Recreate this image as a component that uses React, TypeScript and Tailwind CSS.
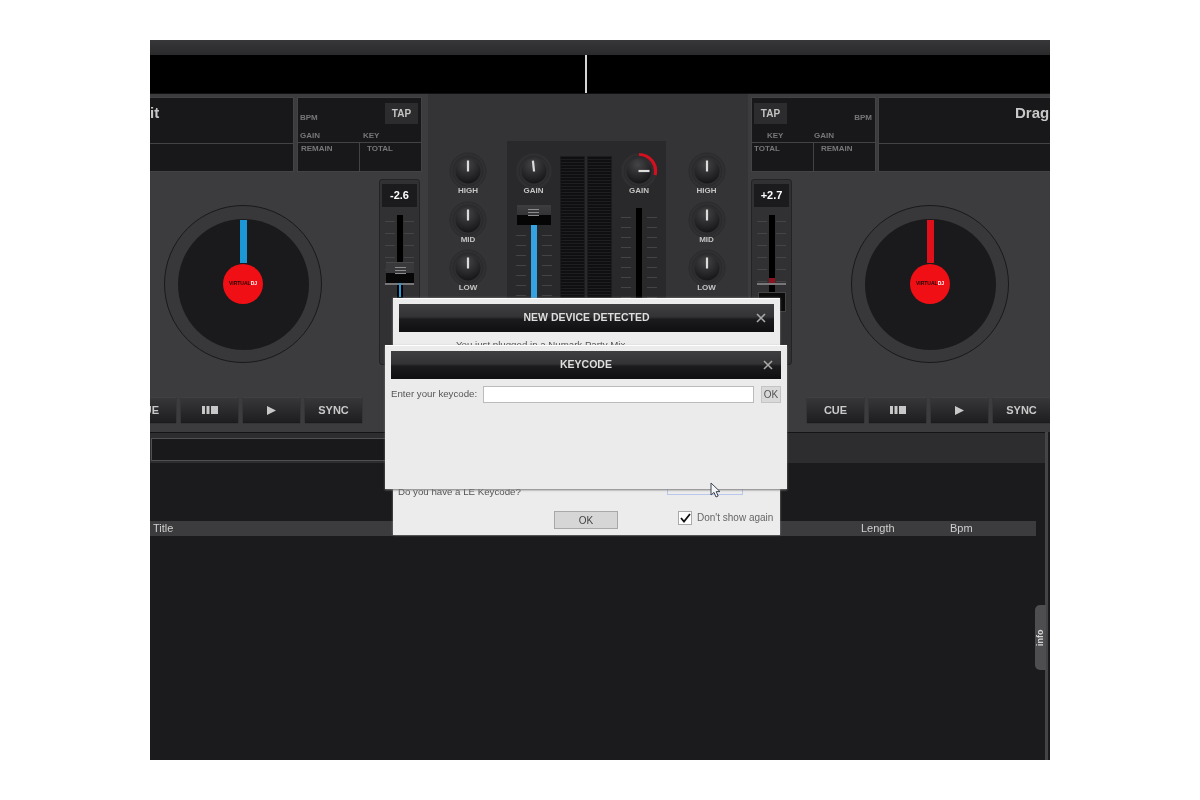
import { useId } from "react";

const FONT = "font-['Liberation_Sans',Arial,sans-serif]";

function Knob({ angle = 0, arc = false }: { angle?: number; arc?: boolean }) {
  const id = useId();
  return (
    <svg width="38" height="38" viewBox="0 0 38 38" className="block shrink-0">
      <defs>
        <radialGradient id={id} cx="45%" cy="25%" r="80%">
          <stop offset="0%" stopColor="#444446" />
          <stop offset="100%" stopColor="#131315" />
        </radialGradient>
      </defs>
      <circle cx="19" cy="19" r="18" fill="#303032" stroke="#2b2b2d" strokeWidth="1" />
      <circle cx="19" cy="19" r="15" fill="#2e2e30" stroke="#2a2a2c" strokeWidth="1" />
      {arc && (
        <path d="M19 2.5 A16.5 16.5 0 0 1 35 23" fill="none" stroke="#d3101f" strokeWidth="3.2" />
      )}
      <circle cx="19" cy="19" r="12.5" fill={`url(#${id})`} />
      <line
        x1="19"
        y1="19.5"
        x2="19"
        y2="8.5"
        stroke="#dcdcdc"
        strokeWidth="2.2"
        transform={`rotate(${angle} 19 19)`}
      />
    </svg>
  );
}

function KnobLabel({ children }: { children: string }) {
  return <span className="-mt-[4px] text-[8px] leading-[10px] font-bold text-[#c4c4c4]">{children}</span>;
}

function EqColumn() {
  return (
    <div className="flex flex-col items-center pt-[58px]">
      {["HIGH", "MID", "LOW"].map((label) => (
        <div key={label} className="flex h-[48.5px] flex-col items-center">
          <Knob />
          <KnobLabel>{label}</KnobLabel>
        </div>
      ))}
    </div>
  );
}

function Ticks({ count, gap }: { count: number; gap: string }) {
  return (
    <div className={`flex w-full flex-col ${gap}`}>
      {Array.from({ length: count }).map((_, i) => (
        <div key={i} className="flex justify-between">
          <span className="h-px w-[10px] bg-[#444446]" />
          <span className="h-px w-[10px] bg-[#444446]" />
        </div>
      ))}
    </div>
  );
}

function Meter() {
  return (
    <div className="h-[200px] w-[25px] border border-[#1c1c1e] bg-[repeating-linear-gradient(0deg,#1e1e20_0,#1e1e20_1px,#0f0f11_1px,#0f0f11_3px)]" />
  );
}

function HandleLines() {
  return (
    <>
      <span className="h-px w-[11px] bg-[#8c8c8e]" />
      <span className="mt-[2px] h-px w-[11px] bg-[#8c8c8e]" />
      <span className="mt-[2px] h-px w-[11px] bg-[#8c8c8e]" />
    </>
  );
}

function Pitch({ value, side }: { value: string; side: "left" | "right" }) {
  const left = side === "left";
  return (
    <div className="flex h-[186px] w-[41px] flex-col items-center rounded-[3px] border border-[#232325] bg-[#313133] px-[2px] pt-[4px]">
      <div className="flex h-[23px] w-[35px] items-center justify-center bg-[#1b1b1d] text-[11px] font-bold text-white">
        {value}
      </div>
      <div className="relative mt-[8px] w-full flex-1 px-[3px]">
        <div className="pt-[6px]">
          <Ticks count={6} gap="gap-[11px]" />
        </div>
        <div className="absolute left-[15px] top-0 h-full w-[6px] bg-black" />
        <div className="absolute left-[3px] right-[3px] top-[68px] h-[2px] bg-[#77777a]" />
        {left ? (
          <>
            <div className="absolute left-[4px] top-[47px] flex h-[21px] w-[28px] flex-col items-center border-t border-[#48484a] bg-[linear-gradient(#39393b_0,#39393b_50%,#070707_50%,#070707_100%)] pt-[4px]">
              <HandleLines />
            </div>
            <div className="absolute left-[17px] top-[68px] h-[14px] w-[2px] bg-[#2a9ad6]" />
          </>
        ) : (
          <>
            <div className="absolute left-[15px] top-[63px] h-[5px] w-[6px] bg-[#8c1220]" />
            <div className="absolute left-[4px] top-[77px] h-[20px] w-[28px] border border-[#444] bg-[#0b0b0b]" />
          </>
        )}
      </div>
    </div>
  );
}

function Platter({ color }: { color: string }) {
  return (
    <div className="flex h-[158px] w-[158px] shrink-0 items-center justify-center rounded-full border border-[#19191b] bg-[#38383a]">
      <div className="flex h-[131px] w-[131px] flex-col items-center rounded-full bg-[#1a1a1c]">
        <div className={`mt-[1px] h-[43px] w-[7px] ${color}`} />
        <div className="mt-[1px] flex h-[40px] w-[40px] items-center justify-center rounded-full bg-[#f00f14] text-[5px] font-bold leading-none text-[#220608]">
          VIRTUAL<span className="text-white">DJ</span>
        </div>
      </div>
    </div>
  );
}

function TransportButton({ children }: { children: React.ReactNode }) {
  return (
    <div className="flex h-[25px] w-[57px] shrink-0 items-center justify-center border-t border-[#404042] bg-[linear-gradient(#37373a,#1e1e20)] text-[11px] font-bold text-[#c9c9c9] shadow-[0_1px_1px_#1b1b1d]">
      {children}
    </div>
  );
}

function Transport() {
  return (
    <>
      <TransportButton>CUE</TransportButton>
      <TransportButton>
        <svg width="16" height="8" viewBox="0 0 16 8">
          <path d="M0 0h3v8H0zM4.5 0h3v8h-3zM9 0h7v8H9z" fill="#c8c8c8" />
        </svg>
      </TransportButton>
      <TransportButton>
        <svg width="9" height="9" viewBox="0 0 9 9">
          <path d="M0 0l9 4.5L0 9z" fill="#c8c8c8" />
        </svg>
      </TransportButton>
      <TransportButton>SYNC</TransportButton>
    </>
  );
}

const panel = "border border-[#434345] bg-[#18181a]";
const small = "text-[8px] leading-[10px] font-bold text-[#77777a]";

function LeftDeck() {
  return (
    <div className="flex w-[278px] shrink-0 flex-col pt-[3px]">
      <div className="flex h-[75px]">
        <div className={`flex w-[144px] flex-col border-l-0 ${panel}`}>
          <div className="h-[45px] pt-[6px] text-[15px] font-bold leading-[18px] text-[#c8c8c8]">it</div>
          <div className="flex-1 border-t border-[#434345]" />
        </div>
        <div className={`ml-[3px] flex w-[125px] flex-col ${panel}`}>
          <div className="relative h-[45px] border-b border-[#434345] pl-[2px] pt-[15px]">
            <div className={`${small} text-[#5c5c5f]`}>BPM</div>
            <div className={`mt-[8px] flex ${small}`}>
              <span className="w-[63px]">GAIN</span>
              <span>KEY</span>
            </div>
            <div className="absolute right-[3px] top-[5px] flex h-[21px] w-[33px] items-center justify-center bg-[#2c2c2e] text-[10px] font-bold text-[#c4c4c4]">
              TAP
            </div>
          </div>
          <div className="flex flex-1">
            <div className={`w-[62px] border-r border-[#434345] pl-[3px] pt-[1px] ${small}`}>REMAIN</div>
            <div className={`pl-[7px] pt-[1px] ${small}`}>TOTAL</div>
          </div>
        </div>
      </div>
      <div className="flex pt-[7px]">
        <div className="flex w-[229px] shrink-0 flex-col">
          <div className="ml-[14px] mt-[26px]">
            <Platter color="bg-[#1c97d6]" />
          </div>
          <div className="mt-[34px] flex justify-end gap-[5px] pr-[17px]">
            <Transport />
          </div>
        </div>
        <Pitch value="-2.6" side="left" />
      </div>
    </div>
  );
}

function Mixer() {
  return (
    <div className="flex w-[320px] shrink-0 bg-[#343436]">
      <div className="w-[79px] shrink-0 pl-px">
        <EqColumn />
      </div>
      <div className="mt-[47px] flex h-[291px] w-[159px] shrink-0 bg-[#29292b]">
        <div className="flex w-[53px] shrink-0 flex-col items-center pt-[11px]">
          <Knob angle={-6} />
          <KnobLabel>GAIN</KnobLabel>
          <div className="relative mt-[9px] flex w-[36px] flex-col items-center">
            <div className="flex h-[20px] w-[34px] flex-col items-center bg-[linear-gradient(#3d3d3f_0,#343436_50%,#050505_50%,#050505_100%)] pt-[4px]">
              <HandleLines />
            </div>
            <div className="h-[90px] w-[6px] bg-[#35a2e2]" />
            <div className="absolute left-0 top-[30px] w-full">
              <Ticks count={7} gap="gap-[9px]" />
            </div>
          </div>
        </div>
        <div className="flex shrink-0 gap-[2px] pt-[15px]">
          <Meter />
          <Meter />
        </div>
        <div className="flex w-[53px] shrink-0 flex-col items-center pl-[1px] pt-[11px]">
          <Knob angle={90} arc />
          <KnobLabel>GAIN</KnobLabel>
          <div className="relative mt-[12px] flex w-[36px] justify-center">
            <div className="h-[100px] w-[6px] bg-black" />
            <div className="absolute left-0 top-[9px] w-full">
              <Ticks count={9} gap="gap-[9px]" />
            </div>
          </div>
        </div>
      </div>
      <div className="flex-1 pr-px">
        <EqColumn />
      </div>
    </div>
  );
}

function RightDeck() {
  return (
    <div className="flex flex-1 flex-col pl-[3px] pt-[3px]">
      <div className="flex h-[75px]">
        <div className={`flex w-[125px] shrink-0 flex-col ${panel}`}>
          <div className="relative h-[45px] border-b border-[#434345] pt-[15px]">
            <div className={`pr-[3px] text-right ${small} text-[#5c5c5f]`}>BPM</div>
            <div className={`mt-[8px] flex pl-[15px] ${small}`}>
              <span className="w-[47px]">KEY</span>
              <span>GAIN</span>
            </div>
            <div className="absolute left-[2px] top-[5px] flex h-[21px] w-[33px] items-center justify-center bg-[#2c2c2e] text-[10px] font-bold text-[#c4c4c4]">
              TAP
            </div>
          </div>
          <div className="flex flex-1">
            <div className={`w-[62px] border-r border-[#434345] pl-[2px] pt-[1px] ${small}`}>TOTAL</div>
            <div className={`pl-[7px] pt-[1px] ${small}`}>REMAIN</div>
          </div>
        </div>
        <div className={`ml-[2px] flex flex-1 flex-col overflow-hidden border-r-0 ${panel}`}>
          <div className="h-[45px] whitespace-nowrap pl-[136px] pt-[6px] text-[15px] font-bold leading-[18px] text-[#c8c8c8]">
            Drag
          </div>
          <div className="flex-1 border-t border-[#434345]" />
        </div>
      </div>
      <div className="flex pt-[7px]">
        <Pitch value="+2.7" side="right" />
        <div className="flex flex-1 flex-col">
          <div className="ml-[59px] mt-[26px]">
            <Platter color="bg-[#e0101a]" />
          </div>
          <div className="mt-[34px] flex gap-[5px] pl-[15px]">
            <Transport />
          </div>
        </div>
      </div>
    </div>
  );
}

function TitleBar({ title }: { title: string }) {
  return (
    <div className="flex h-[28px] shrink-0 items-center bg-[linear-gradient(#3f3f41_0,#333335_45%,#1b1b1d_55%,#0f0f11_100%)] pr-[8px]">
      <span className="flex-1 pl-[18px] text-center text-[10.5px] font-bold text-[#dedede]">{title}</span>
      <svg width="10" height="10" viewBox="0 0 10 10">
        <path d="M1 1l8 8M9 1l-8 8" stroke="#a8a8a8" strokeWidth="1.6" />
      </svg>
    </div>
  );
}

function Dialogs() {
  return (
    <>
      <div className="absolute left-[243px] top-[258px] flex h-[237px] w-[387px] flex-col whitespace-nowrap border-t border-white bg-[#ececec] px-[6px] pt-[5px] shadow-[0_0_2px_#888]">
        <TitleBar title="NEW DEVICE DETECTED" />
        <div className="mt-[7px] pl-[57px] text-[9.7px] leading-[12px] text-[#555]">
          You just plugged in a Numark Party Mix
        </div>
        <div className="mt-[133px] flex h-[14px] items-end justify-between text-[9.7px] leading-[12px] text-[#555]">
          <span className="-ml-px">Do you have a LE Keycode?</span>
          <span className="mr-[31px] h-[11px] w-[76px] self-start border border-[#b9c8ea]" />
        </div>
        <div className="mt-[13px] flex items-start">
          <div className="ml-[155px] flex h-[18px] w-[64px] items-center justify-center border border-[#a8a8a8] bg-[#d6d6d6] text-[10px] text-[#444]">
            OK
          </div>
          <div className="ml-[60px] flex h-[14px] w-[14px] items-center justify-center border border-[#aaa] bg-white">
            <svg width="11" height="10" viewBox="0 0 11 10">
              <path d="M1 5l3 3.5L10 1" fill="none" stroke="#111" strokeWidth="1.8" />
            </svg>
          </div>
          <span className="ml-[5px] text-[10px] leading-[14px] text-[#666]">Don't show again</span>
        </div>
      </div>

      <div className="absolute left-[235px] top-[305px] flex h-[144px] w-[402px] flex-col whitespace-nowrap border-t border-white bg-[#ebebeb] px-[6px] pt-[5px] shadow-[0_1px_2px_#777]">
        <TitleBar title="KEYCODE" />
        <div className="mt-[7px] flex h-[17px] items-center">
          <span className="w-[92px] shrink-0 text-[9.7px] text-[#555]">Enter your keycode:</span>
          <div className="h-full w-[271px] border border-[#bbb] bg-white" />
          <div className="ml-[7px] flex h-full w-[20px] items-center justify-center border border-[#c4c4c4] bg-[#d9d9d9] text-[10px] text-[#555]">
            OK
          </div>
        </div>
      </div>

      <svg className="absolute left-[560px] top-[442px]" width="11" height="17" viewBox="0 0 11 17">
        <path d="M1 1v12l3-2.6 2 4.6 2.2-1-2-4.4H10z" fill="#f4f4f4" stroke="#3b4354" strokeWidth="1" />
      </svg>
    </>
  );
}

export default function App() {
  return (
    <div className={`flex min-h-[800px] justify-center bg-white pt-[40px] ${FONT}`}>
      <div className="relative flex h-[720px] w-[900px] flex-col overflow-hidden bg-[#1b1b1d] blur-[0.5px]">
        <div className="h-[15px] bg-[linear-gradient(#37373a,#2a2a2c)]" />
        <div className="flex h-[38px] bg-black">
          <div className="w-[435px]" />
          <div className="w-[2px] bg-[#d5d5d5]" />
        </div>
        <div className="h-px bg-[#111]" />

        <div className="flex h-[338px] bg-[#3c3c3e]">
          <LeftDeck />
          <Mixer />
          <RightDeck />
        </div>

        <div className="flex flex-1">
          <div className="flex flex-1 flex-col">
            <div className="flex h-[31px] items-start border-t border-[#141416] bg-[#2d2d2f] pl-px pt-[5px]">
              <div className="h-[23px] w-[300px] border border-[#505052] bg-[#19191b]" />
            </div>
            <div className="mt-[58px] flex h-[15px] w-[886px] items-center bg-[#3c3c3e] text-[11px] text-[#cfcfcf]">
              <span className="w-[711px] pl-[3px]">Title</span>
              <span className="w-[89px]">Length</span>
              <span>Bpm</span>
            </div>
          </div>
          <div className="w-[3px] bg-[#444446]" />
          <div className="w-[2px]" />
        </div>

        <div className="absolute left-[885px] top-[565px] flex h-[65px] w-[11px] items-center justify-center rounded-l-[5px] bg-[#4e4e50]">
          <span className="rotate-[-90deg] text-[9px] font-bold text-[#d4d4d4]">info</span>
        </div>

        <Dialogs />
      </div>
    </div>
  );
}
